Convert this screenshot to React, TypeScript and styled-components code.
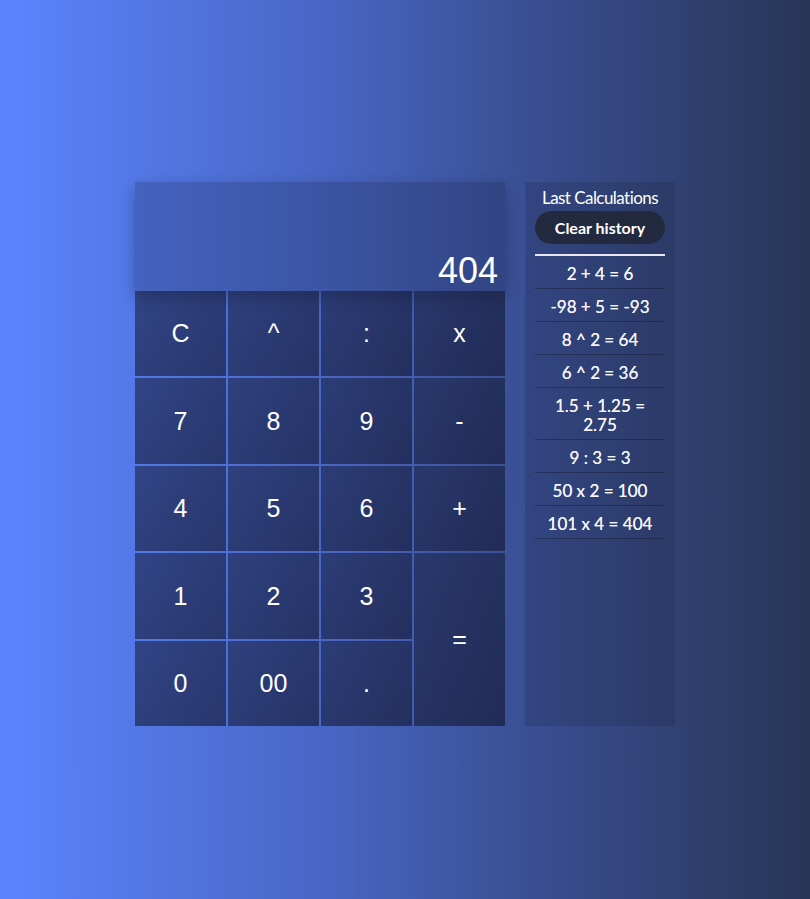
import React from 'react'
import styled, { createGlobalStyle } from 'styled-components'

const GlobalStyle = createGlobalStyle`
    html, body {
        margin: 0;
        padding: 0;
    }
    body {
        min-height: 899px;
        background: linear-gradient(90deg, #5b85ff 0%, #4866c4 40%, #3a4f93 65%, #273556 100%);
        font-family: 'Liberation Sans', Arial, sans-serif;
    }
`

const Page = styled.main`
    display: flex;
    justify-content: center;
    align-items: flex-start;
    gap: 20px;
    padding-top: 182px;
`

const Calculator = styled.section`
    width: 370px;
    display: flex;
    flex-direction: column;
`

const Display = styled.div`
    height: 109px;
    display: flex;
    align-items: flex-end;
    justify-content: flex-end;
    padding: 0 7px 0;
    box-sizing: border-box;
    background: rgba(20, 25, 50, 0.22);
    box-shadow: 0 6px 14px rgba(20, 25, 50, 0.35);
    position: relative;
    z-index: 1;
    color: #fff;
    font-size: 36px;
    line-height: 40px;
`

const Keypad = styled.div`
    display: grid;
    grid-template-columns: repeat(4, 91px);
    grid-template-rows: 85px 86px 85px 86px 85px;
    gap: 2px;
`

const Key = styled.button<{ $tall?: boolean }>`
    border: none;
    padding: 0;
    margin: 0;
    background: linear-gradient(135deg, rgba(22, 28, 58, 0.56), rgba(18, 22, 48, 0.64));
    color: #fff;
    font-family: 'Liberation Sans', Arial, sans-serif;
    font-size: 25px;
    cursor: pointer;
    grid-row: ${p => (p.$tall ? 'span 2' : 'auto')};
`

const History = styled.aside`
    width: 150px;
    height: 544px;
    box-sizing: border-box;
    padding: 6px 10px;
    background: rgba(20, 25, 50, 0.18);
    display: flex;
    flex-direction: column;
    align-items: stretch;
    font-family: Lato, 'Noto Sans', sans-serif;
    color: #fff;
`

const Title = styled.h2`
    margin: 0;
    font-size: 17px;
    font-weight: 400;
    line-height: 20px;
    letter-spacing: -0.55px;
    text-align: center;
`

const ClearButton = styled.button`
    margin-top: 3px;
    height: 33px;
    border: none;
    border-radius: 17px;
    background: #232a40;
    color: #fff;
    font-family: Lato, 'Noto Sans', sans-serif;
    font-weight: 700;
    font-size: 16px;
    cursor: pointer;
`

const Divider = styled.hr`
    margin: 10px 0 0;
    border: none;
    height: 2px;
    background: #e8e8ee;
`

const Entries = styled.ul`
    list-style: none;
    margin: 0;
    padding: 0;
`

const Entry = styled.li`
    padding: 8px 4px 5px;
    font-size: 17px;
    line-height: 19px;
    text-align: center;
    color: #f4f4f8;
    text-shadow: 0 0 0.4px #fff;
    border-bottom: 1px solid rgba(20, 24, 45, 0.45);
`

const keys: { label: string; tall?: boolean }[] = [
    { label: 'C' }, { label: '^' }, { label: ':' }, { label: 'x' },
    { label: '7' }, { label: '8' }, { label: '9' }, { label: '-' },
    { label: '4' }, { label: '5' }, { label: '6' }, { label: '+' },
    { label: '1' }, { label: '2' }, { label: '3' }, { label: '=', tall: true },
    { label: '0' }, { label: '00' }, { label: '.' },
]

const history = [
    '2 + 4 = 6',
    '-98 + 5 = -93',
    '8 ^ 2 = 64',
    '6 ^ 2 = 36',
    '1.5 + 1.25 = 2.75',
    '9 : 3 = 3',
    '50 x 2 = 100',
    '101 x 4 = 404',
]

const App: React.FC = () => {
    return (
        <>
            <GlobalStyle />
            <Page>
                <Calculator>
                    <Display>404</Display>
                    <Keypad>
                        {keys.map(k => (
                            <Key key={k.label} $tall={k.tall}>{k.label}</Key>
                        ))}
                    </Keypad>
                </Calculator>
                <History>
                    <Title>Last Calculations</Title>
                    <ClearButton>Clear history</ClearButton>
                    <Divider />
                    <Entries>
                        {history.map(h => (
                            <Entry key={h}>{h}</Entry>
                        ))}
                    </Entries>
                </History>
            </Page>
        </>
    )
}

export default App
